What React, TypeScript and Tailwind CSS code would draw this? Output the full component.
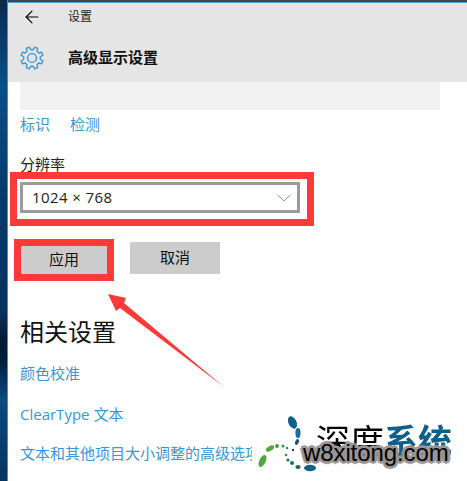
import { ArrowLeft, ChevronDown } from "lucide-react";

const cjk = "font-['Liberation_Sans','Noto_Sans_CJK_SC',sans-serif]";

// 8 tooth gear outline, same look as the settings page icon
function gearPath() {
  const pts: string[] = [];
  for (let i = 0; i < 8; i++) {
    const a = (i * Math.PI) / 4 + Math.PI / 8;
    const step = Math.PI / 8;
    const list: [number, number][] = [
      [8.4, a - step * 0.62],
      [11.2, a - step * 0.36],
      [11.2, a + step * 0.36],
      [8.4, a + step * 0.62],
    ];
    for (const [r, t] of list) {
      pts.push(`${(12 + r * Math.cos(t)).toFixed(2)} ${(12 + r * Math.sin(t)).toFixed(2)}`);
    }
  }
  return `M${pts.join(" L")} Z`;
}

function Watermark() {
  return (
    <div className="absolute left-[256px] top-[412px] h-[69px] w-[211px] overflow-hidden">
      <svg width="62" height="62" viewBox="0 0 62 62" className="absolute left-0 top-0">
        <ellipse cx="36.5" cy="10.5" rx="4" ry="6.5" transform="rotate(-25 36.5 10.5)" fill="#0f5f8a" />
        <ellipse cx="42" cy="21" rx="2.6" ry="5" fill="#1f6c9c" />
        <ellipse cx="41" cy="30" rx="1.8" ry="3" transform="rotate(20 41 30)" fill="#1f4f8c" />
        <circle cx="37" cy="38" r="1.2" fill="#1f3f7c" />
        <ellipse cx="6.5" cy="49" rx="3.2" ry="6.5" transform="rotate(25 6.5 49)" fill="#4ea83c" />
        <ellipse cx="14" cy="36.5" rx="4.5" ry="2.4" transform="rotate(-30 14 36.5)" fill="#4ea83c" />
        <circle cx="21" cy="34" r="1.9" fill="#3d9a4a" />
        <circle cx="27" cy="34" r="1.6" fill="#3d9a4a" />
        <circle cx="31" cy="36" r="1.2" fill="#2f8a5f" />
        <circle cx="30" cy="43" r="1.3" fill="#2f8a5f" />
        <circle cx="32" cy="48" r="1.6" fill="#1f7060" />
        <circle cx="36" cy="51" r="2" fill="#1f7060" />
        <ellipse cx="42" cy="55" rx="2.6" ry="2" fill="#1c6660" />
        <ellipse cx="54" cy="56" rx="6" ry="3.2" fill="#0f5f8a" />
      </svg>
      <div
        className={`absolute left-[60px] top-[11px] flex text-[34px] leading-[38px] [-webkit-box-reflect:below_-14px_linear-gradient(transparent_62%,rgba(255,255,255,0.35))] ${cjk}`}
      >
        <span className="text-black">深度</span>
        <span className="font-bold text-[#0f5f8a]">系统</span>
      </div>
      <div className="absolute left-[47px] top-[27px] font-['Liberation_Sans',sans-serif] text-[24px] leading-[28px] tracking-[-0.1px] text-black [text-shadow:2px_0_0_#9a9494,-2px_0_0_#9a9494,0_2px_0_#9a9494,0_-2px_0_#9a9494,2px_2px_0_#9a9494,-2px_2px_0_#9a9494,2px_-2px_0_#9a9494,-2px_-2px_0_#9a9494,3px_0_1px_#9a9494,-3px_0_1px_#9a9494,0_3px_1px_#9a9494,0_-3px_1px_#9a9494]">
        w8xitong.com
      </div>
    </div>
  );
}

export default function App() {
  return (
    <div className={`relative flex h-[481px] w-[467px] overflow-hidden bg-[#0b3a66] ${cjk}`}>
      <div className="w-[7px] shrink-0 bg-[linear-gradient(to_bottom,#062a4e_0px,#0a4f88_85px,#06396a_200px,#06335f_310px,#021a33_340px,#021d38_360px,#0a4a80_400px,#05345f_481px)]" />
      <div className="flex min-w-0 flex-1 flex-col border-l border-[#3f8fd0] bg-white">
        <div className="h-[2px] bg-[#444444]" />
        <div className="h-[1px] bg-[#4aa3e0]" />

        {/* header */}
        <div className="flex h-[79px] flex-col bg-[#e5e5e5] pl-[12px]">
          <div className="flex h-[28px] items-center">
            <ArrowLeft className="ml-[2px] h-[20px] w-[20px] text-black" strokeWidth={1.4} />
            <span className="ml-[26px] text-[12px] text-[#222222]">设置</span>
          </div>
          <div className="mt-[15px] flex items-center">
            <svg width="24" height="24" viewBox="0 0 24 24" fill="none" stroke="#3f97d6" strokeWidth="1.4" strokeLinejoin="round">
              <path d={gearPath()} />
              <circle cx="12" cy="12" r="4.4" />
            </svg>
            <span className="ml-[24px] text-[15px] font-bold text-[#111111]">高级显示设置</span>
          </div>
        </div>

        <div className="ml-[12px] h-[28px] w-[420px] bg-[#f2f2f2]" />

        <div className="ml-[12px] mt-[5px] flex gap-[20px] text-[15px] leading-[20px] text-[#3a96d4]">
          <span>标识</span>
          <span>检测</span>
        </div>

        <div className="ml-[12px] mt-[20px] text-[15px] leading-[20px] text-[#222222]">分辨率</div>

        {/* resolution select */}
        <div className="ml-[2px] mt-[-3px] w-[304px] border-[7px] border-[#fd3a3a] pb-[6px] pl-[3px] pt-[3px]">
          <div className="flex h-[31px] w-[280px] items-center justify-between border-[3px] border-[#9b9b9b] pl-[9px] pr-[1px] text-[15px] text-[#222222]">
            <span className="font-['Open_Sans',sans-serif] tracking-[0.4px]">1024 × 768</span>
            <ChevronDown className="h-[24px] w-[24px] text-[#9a9a9a]" strokeWidth={1} />
          </div>
        </div>

        {/* buttons */}
        <div className="ml-[6px] mt-[13px] flex items-end">
          <div className="border-[7px] border-[#fd3a3a]">
            <div className="flex h-[28px] w-[86px] items-center justify-center bg-[#cccccc] text-[15px] text-[#111111]">
              应用
            </div>
          </div>
          <div className="mb-[7px] ml-[16px] flex h-[32px] w-[90px] items-center justify-center bg-[#cccccc] text-[15px] text-[#111111]">
            取消
          </div>
        </div>

        <div className="ml-[12px] mt-[36px] text-[24px] leading-[32px] text-[#111111]">相关设置</div>

        <div className="ml-[12px] mt-[15px] flex flex-col gap-[20px] text-[15px] leading-[20px] text-[#3a96d4]">
          <span>颜色校准</span>
          <span className="font-['Open_Sans','Noto_Sans_CJK_SC',sans-serif]">ClearType 文本</span>
          <span className="w-[232px] overflow-hidden whitespace-nowrap">文本和其他项目大小调整的高级选项</span>
        </div>
      </div>

      {/* annotation arrow */}
      <svg width="120" height="110" viewBox="0 0 120 110" className="absolute left-[105px] top-[290px]">
        <path d="M3 4 L21 8 L19 13 L119 97 L15 18 L11 21 Z" fill="#fd3a3a" />
      </svg>

      <Watermark />
    </div>
  );
}
